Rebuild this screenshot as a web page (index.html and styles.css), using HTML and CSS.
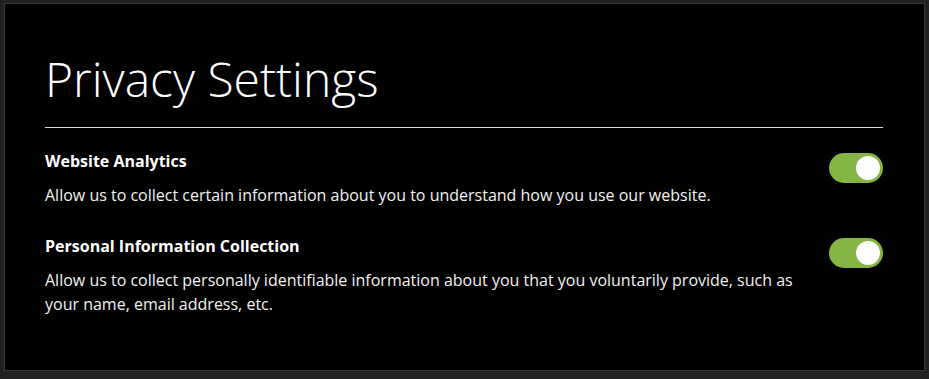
FILE: index.html
```html
<!DOCTYPE html>
<html lang="en">
<head>
<meta charset="utf-8">
<title>Privacy Settings</title>
<link rel="stylesheet" href="styles.css">
</head>
<body>
<div class="panel">
  <h1 class="title">Privacy Settings</h1>
  <div class="rule"></div>
  <div class="setting">
    <div class="text">
      <div class="name">Website Analytics</div>
      <div class="desc">Allow us to collect certain information about you to understand how you use our website.</div>
    </div>
    <div class="toggle on"><span class="knob"></span></div>
  </div>
  <div class="setting">
    <div class="text">
      <div class="name">Personal Information Collection</div>
      <div class="desc">Allow us to collect personally identifiable information about you that you voluntarily provide, such as your name, email address, etc.</div>
    </div>
    <div class="toggle on"><span class="knob"></span></div>
  </div>
</div>
</body>
</html>
```
FILE: styles.css
```css
html, body {
  margin: 0;
  padding: 0;
  background: #222222;
}
body {
  padding: 3px 5px 0 4px;
  font-family: "Open Sans", "Liberation Sans", sans-serif;
  color: #ffffff;
}
.panel {
  box-sizing: border-box;
  width: 921px;
  height: 368px;
  background: #000000;
  border: 1px solid #3a3a3a;
  padding: 46px 41px 0 40px;
}
.title {
  margin: 0;
  font-size: 48px;
  font-weight: 300;
  line-height: 58px;
}
.rule {
  margin-top: 19px;
  border-top: 1px solid #dddddd;
}
.setting {
  display: flex;
  align-items: flex-start;
  gap: 20px;
  margin-top: 21px;
}
.setting + .setting {
  margin-top: 27px;
}
.text {
  flex: 1;
}
.name {
  font-size: 16px;
  font-weight: 700;
  line-height: 24px;
  margin-bottom: 10px;
}
.desc {
  font-size: 16px;
  line-height: 24px;
  color: #f2f2f2;
}
.toggle {
  flex: none;
  position: relative;
  width: 54px;
  height: 30px;
  border-radius: 15px;
  background: #85b543;
  margin-top: 4px;
}
.knob {
  position: absolute;
  top: 3px;
  right: 3px;
  width: 24px;
  height: 24px;
  border-radius: 50%;
  background: #ffffff;
}
```
